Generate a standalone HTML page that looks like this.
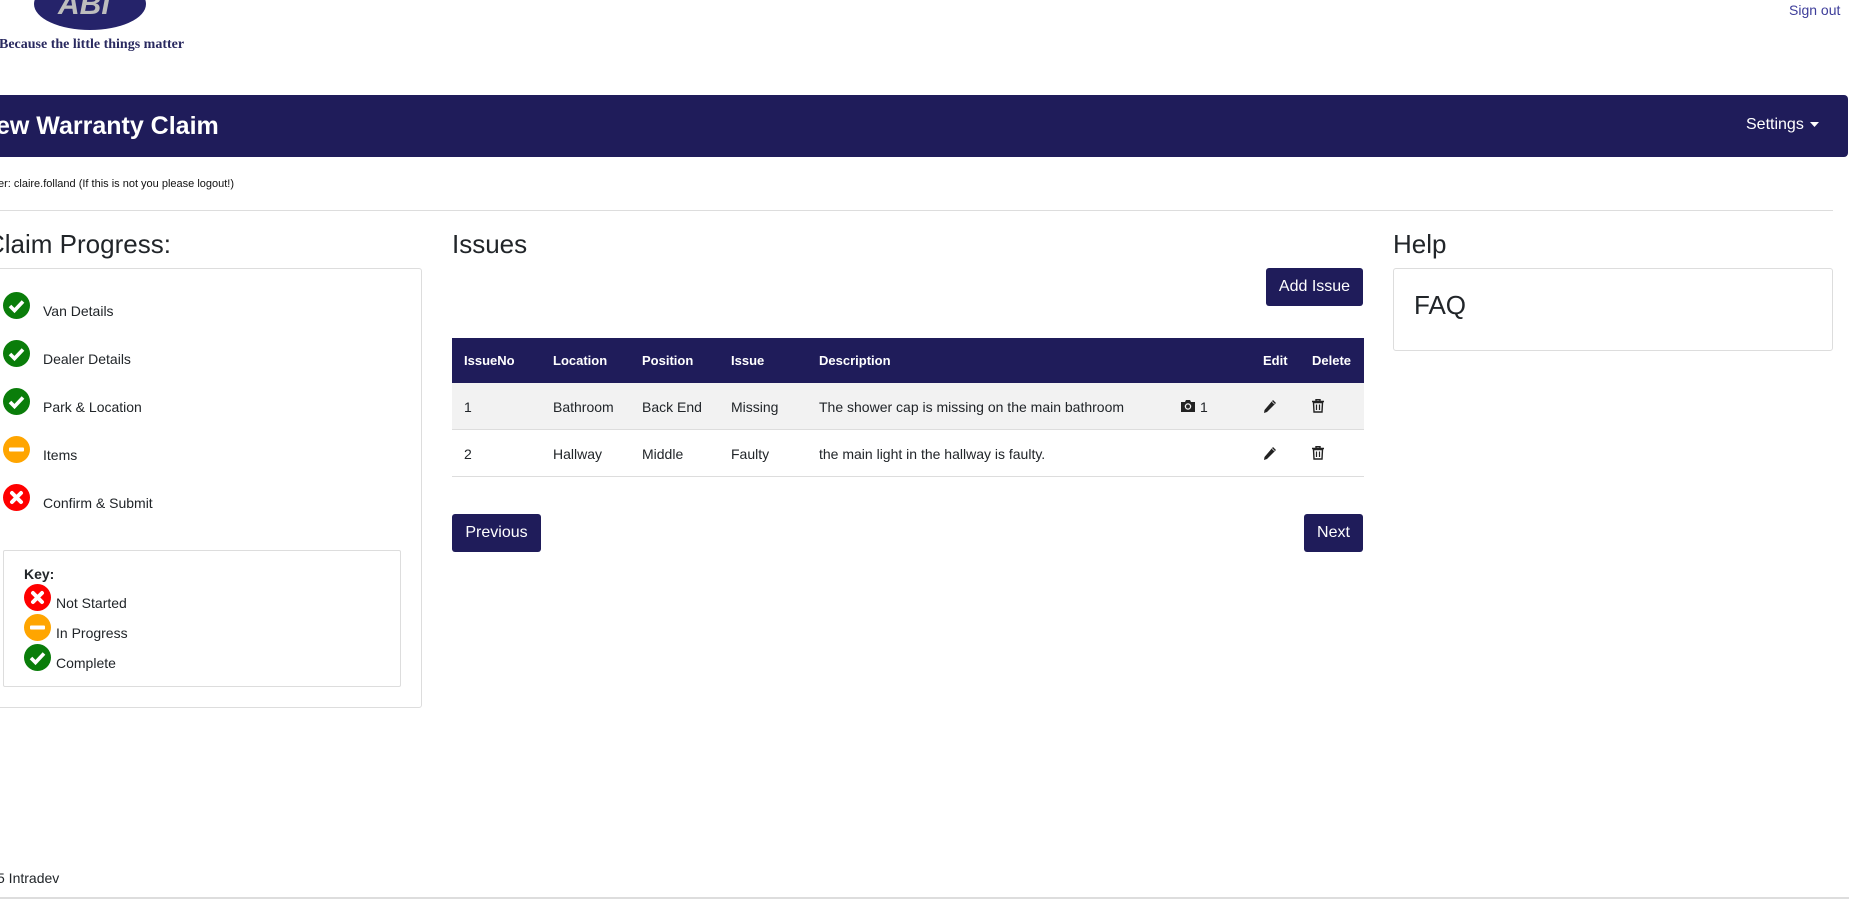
<!DOCTYPE html>
<html><head><meta charset="utf-8"><style>
*{box-sizing:border-box;margin:0;padding:0}
body{width:1849px;height:901px;position:relative;overflow:hidden;background:#fff;font-family:"Liberation Sans",Arial,sans-serif;color:#212529}
.a{position:absolute;white-space:nowrap}
.nav{position:absolute;left:0;top:95px;width:1848px;height:62px;background:#1f1c5a;border-radius:0 4px 4px 0}
.btn{position:absolute;background:#1f1c5a;color:#fff;font-size:16px;border-radius:3px;display:flex;align-items:center;justify-content:center}
.ic{position:absolute;width:27px;height:27px}
.row{position:absolute;left:452px;width:912px;font-size:14px}
.row span{position:absolute;top:0}
</style></head><body>
<svg class="a" style="left:0;top:0" width="200" height="60">
<ellipse cx="90" cy="4" rx="56" ry="26" fill="#25236a"/>
<text x="58" y="14" font-family="Liberation Sans,sans-serif" font-weight="bold" font-style="italic" font-size="30" fill="#bdbdbd">ABI</text>
<text x="-1" y="48" font-family="Liberation Serif,serif" font-weight="bold" font-size="14" fill="#2a2a60">Because the little things matter</text>
</svg>
<div class="a" style="left:1789px;top:2px;font-size:14px;color:#3d3d9a">Sign out</div>
<div class="nav"></div>
<div class="a" style="left:-4px;top:112px;font-size:25px;font-weight:bold;color:#fff">ew Warranty Claim</div>
<div class="a" style="left:1746px;top:116px;font-size:16px;color:#fff">Settings</div>
<svg class="a" style="left:1810px;top:122px" width="10" height="6"><path d="M0 0H9L4.5 5Z" fill="#fff"/></svg>
<div class="a" style="left:-2px;top:178px;font-size:11px;color:#111">er: claire.folland (If this is not you please logout!)</div>
<div class="a" style="left:0;top:210px;width:1833px;height:1px;background:#ddd"></div>

<div class="a" style="left:-14px;top:229px;font-size:26px">Claim Progress:</div>
<div class="a" style="left:-5px;top:268px;width:427px;height:440px;border:1px solid #ddd;border-radius:3px"></div>

<svg width="0" height="0" style="position:absolute"><defs>
<g id="ok"><circle cx="13.5" cy="13.5" r="13.5" fill="#0a7d0a"/><path d="M7 14 L11.5 18.5 L20 9.5" stroke="#fff" stroke-width="3.6" fill="none"/></g>
<g id="ip"><circle cx="13.5" cy="13.5" r="13.5" fill="#ffa500"/><rect x="6" y="11.5" width="15" height="4" rx="1" fill="#fff"/></g>
<g id="no"><circle cx="13.5" cy="13.5" r="13.5" fill="#f00"/><path d="M9 9 L18 18 M18 9 L9 18" stroke="#fff" stroke-width="4" stroke-linecap="round"/></g>
</defs></svg>
<svg class="ic" style="left:3px;top:292px"><use href="#ok"/></svg>
<svg class="ic" style="left:3px;top:340px"><use href="#ok"/></svg>
<svg class="ic" style="left:3px;top:388px"><use href="#ok"/></svg>
<svg class="ic" style="left:3px;top:436px"><use href="#ip"/></svg>
<svg class="ic" style="left:3px;top:484px"><use href="#no"/></svg>
<div class="a" style="left:43px;top:303px;font-size:14px">Van Details</div>
<div class="a" style="left:43px;top:351px;font-size:14px">Dealer Details</div>
<div class="a" style="left:43px;top:399px;font-size:14px">Park &amp; Location</div>
<div class="a" style="left:43px;top:447px;font-size:14px">Items</div>
<div class="a" style="left:43px;top:495px;font-size:14px">Confirm &amp; Submit</div>
<div class="a" style="left:3px;top:550px;width:398px;height:137px;border:1px solid #ddd;border-radius:2px"></div>
<div class="a" style="left:24px;top:566px;font-size:14px;font-weight:bold">Key:</div>
<svg class="ic" style="left:24px;top:584px"><use href="#no"/></svg>
<svg class="ic" style="left:24px;top:614px"><use href="#ip"/></svg>
<svg class="ic" style="left:24px;top:644px"><use href="#ok"/></svg>
<div class="a" style="left:56px;top:595px;font-size:14px">Not Started</div>
<div class="a" style="left:56px;top:625px;font-size:14px">In Progress</div>
<div class="a" style="left:56px;top:655px;font-size:14px">Complete</div>

<div class="a" style="left:452px;top:229px;font-size:26px">Issues</div>
<div class="btn" style="left:1266px;top:268px;width:97px;height:38px">Add Issue</div>
<div class="a" style="left:452px;top:338px;width:912px;height:45px;background:#1f1c5a"></div>
<div class="row" style="top:353px;color:#fff;font-weight:bold;font-size:13px"><span style="left:12px">IssueNo</span><span style="left:101px">Location</span><span style="left:190px">Position</span><span style="left:279px">Issue</span><span style="left:367px">Description</span><span style="left:811px">Edit</span><span style="left:860px">Delete</span></div>
<div class="a" style="left:452px;top:383px;width:912px;height:47px;background:#f2f2f2;border-bottom:1px solid #ddd"></div>
<div class="a" style="left:452px;top:430px;width:912px;height:47px;border-bottom:1px solid #ddd"></div>
<div class="row" style="top:399px"><span style="left:12px">1</span><span style="left:101px">Bathroom</span><span style="left:190px">Back End</span><span style="left:279px">Missing</span><span style="left:367px">The shower cap is missing on the main bathroom</span><span style="left:748px">1</span></div>
<div class="row" style="top:446px"><span style="left:12px">2</span><span style="left:101px">Hallway</span><span style="left:190px">Middle</span><span style="left:279px">Faulty</span><span style="left:367px">the main light in the hallway is faulty.</span></div>
<svg class="a" style="left:1181px;top:399px" width="14" height="13"><path d="M0 3H4L5 1H9L10 3H14V13H0Z" fill="#222"/><circle cx="7" cy="7.5" r="2.6" fill="none" stroke="#f2f2f2" stroke-width="1.3"/></svg>
<svg width="0" height="0" style="position:absolute"><defs>
<g id="pen"><path d="M10 1 L13 4 L4 13 L1 14 L1.5 11 Z" fill="#222"/><path d="M9 2.5 L11.5 5" stroke="#f2f2f2" stroke-width="0.8"/></g>
<g id="bin"><path d="M0 2.5H12M4 2.5V0.7H8V2.5" stroke="#222" stroke-width="1.4" fill="none"/><path d="M1.5 3.5H10.5L10 13H2Z" fill="none" stroke="#222" stroke-width="1.4"/><path d="M4.5 5.5V11M7.5 5.5V11" stroke="#222" stroke-width="1.2"/></g>
</defs></svg>
<svg class="a" style="left:1263px;top:399px" width="15" height="15"><use href="#pen"/></svg>
<svg class="a" style="left:1312px;top:399px" width="13" height="14"><use href="#bin"/></svg>
<svg class="a" style="left:1263px;top:446px" width="15" height="15"><use href="#pen"/></svg>
<svg class="a" style="left:1312px;top:446px" width="13" height="14"><use href="#bin"/></svg>
<div class="btn" style="left:452px;top:514px;width:89px;height:38px">Previous</div>
<div class="btn" style="left:1304px;top:514px;width:59px;height:38px">Next</div>

<div class="a" style="left:1393px;top:229px;font-size:26px">Help</div>
<div class="a" style="left:1393px;top:268px;width:440px;height:83px;border:1px solid #ddd;border-radius:3px"></div>
<div class="a" style="left:1414px;top:290px;font-size:26px">FAQ</div>

<div class="a" style="left:-3px;top:870px;font-size:14px">5 Intradev</div>
<div class="a" style="left:0;top:897px;width:1849px;height:2px;background:#ddd"></div>
</body></html>
